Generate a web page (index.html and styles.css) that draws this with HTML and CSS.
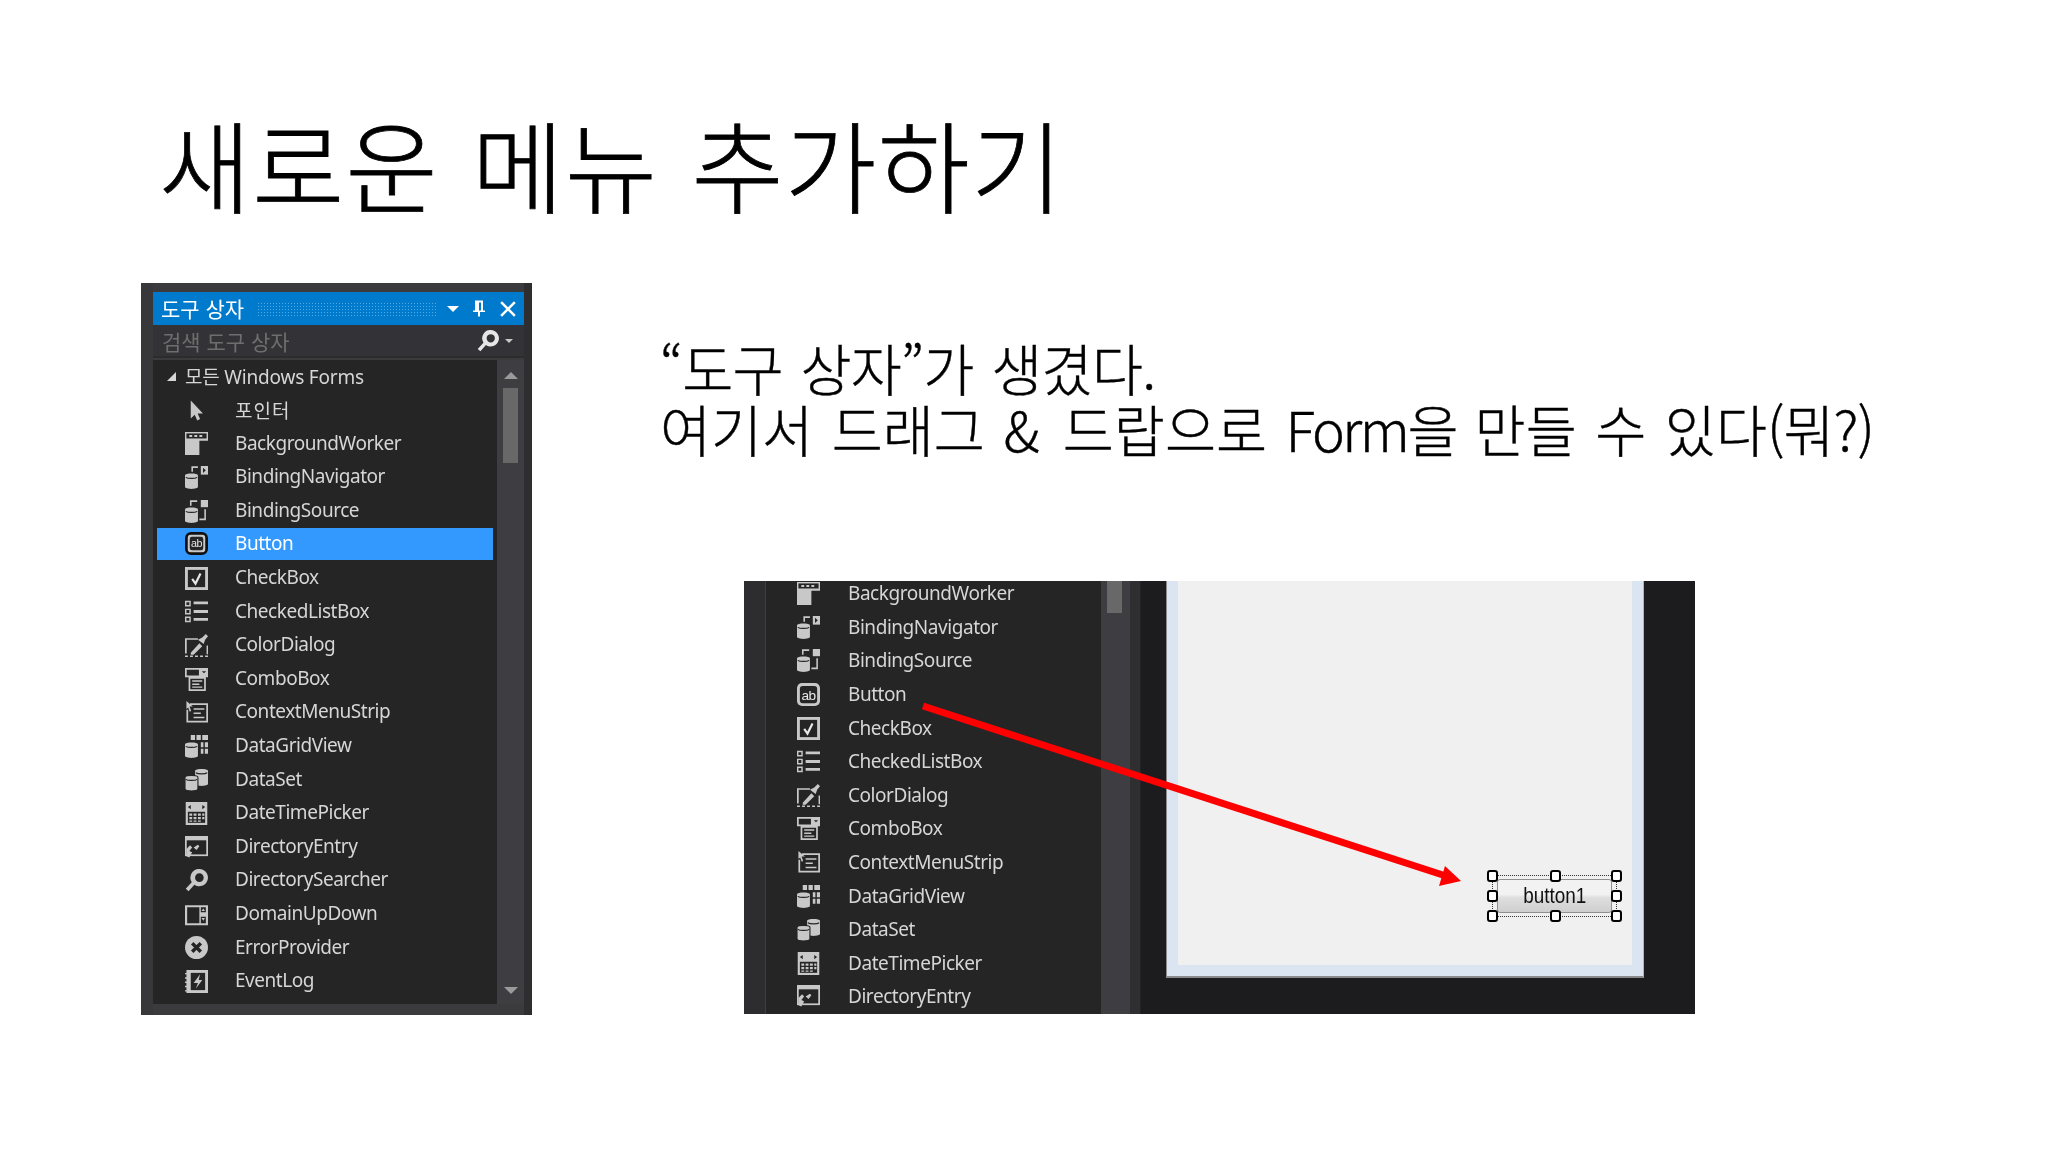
FILE: index.html
```html
<!DOCTYPE html>
<html lang="ko">
<head>
<meta charset="utf-8">
<title>새로운 메뉴 추가하기</title>
<link rel="stylesheet" href="styles.css">
</head>
<body>
<svg class="defs" width="0" height="0" aria-hidden="true">
  <defs>
    <symbol id="i-cyl" viewBox="0 0 16 16"><path d="M0 6.500c0-1.800 9-1.800 9 0v8c0 2-9 2-9 0z"/><path d="M.5 7.900c1.500 1 6.500 1 8 0" fill="none" stroke="#252526" stroke-width=".8"/></symbol>
    <symbol id="i-ptr" viewBox="0 0 16 16"><path d="M4 1v12.500l2.800-2.600 1.700 4 2-1-1.700-3.800h3.700z"/></symbol>
    <symbol id="i-bg" viewBox="0 0 16 16"><path d="M0 0h16v6h-6v10H0z"/><rect x="1" y="1" width="14" height="3.500" fill="#252526"/><path d="M3 2h2v1.500H3zM6.500 2h2v1.500h-2zM10 2h2v1.500h-2z"/></symbol>
    <symbol id="i-nav" viewBox="0 0 16 16"><use href="#i-cyl"/><path d="M5 4V.8h4" fill="none" stroke="currentColor" stroke-width="1.100"/><path d="M11 0h5v6h-5z"/><path d="M12.500 1.200l2 1.800-2 1.800z" fill="#252526"/></symbol>
    <symbol id="i-src" viewBox="0 0 16 16"><use href="#i-cyl"/><path d="M4 4V.8h4.500M10 13.500h4V6.500" fill="none" stroke="currentColor" stroke-width="1.100"/><rect x="11" y="0" width="5" height="5"/></symbol>
    <symbol id="i-btn" viewBox="0 0 16 16"><rect x="0" y="0" width="16" height="16" rx="3.500"/><rect x="2" y="2" width="12" height="12" rx="2" fill="#252526"/><text class="ab" x="8" y="11.500" text-anchor="middle" fill="#e8e8e8">ab</text></symbol>
    <symbol id="i-chk" viewBox="0 0 16 16"><path d="M0 0h16v16H0z"/><rect x="2" y="2" width="12" height="12" fill="#252526"/><path d="M5 8.200l2.300 3.300 3.500-7" fill="none" stroke="#e8e8e8" stroke-width="1.500"/></symbol>
    <symbol id="i-list" viewBox="0 0 16 16"><path d="M0 .5h4v4H0zm1 1v2h2v-2zM0 6h4v4H0zm1 1v2h2V7zM0 11.500h4v4H0zm1 1v2h2v-2zM6 1h10v2H6zM6 7h10v2H6zM6 12.500h10v2H6z" fill-rule="evenodd"/></symbol>
    <symbol id="i-color" viewBox="0 0 16 16"><path d="M0 3h9v1H1.200v9.500H0zM15 8h1v6h-1zM0 15h2v1H0zM3.500 15h2v1h-2zM7 15h2v1H7zM10.500 15h2v1h-2zM14 15h2v1h-2z"/><path d="M4 13l6-6.500 2 2L6 14.500H4zM9 4l3-1.500L14.500 0 16 1.500 14 4l-1 3z"/></symbol>
    <symbol id="i-combo" viewBox="0 0 16 16"><path d="M0 0h16v6.500h-1.500V16h-12V6.500H0zm1.200 1.200v4h8.500v-4zm10.500 1h3l-1.500 1.500zM3.700 7.500V14.800h9.600V7.500z" fill-rule="evenodd"/><path d="M5 8.500h7v1.100H5zM5 10.700h5v1.100H5zM5 12.800h7v1H5z"/></symbol>
    <symbol id="i-ctx" viewBox="0 0 16 16"><path d="M3.500 1.500H16V15H1V6h1.200v7.800h12.600V2.700H3.500z"/><path d="M1 0l4.500 3.800H3.200L4.300 7l-1 .4L2.200 4.500 1 5.500z"/><path d="M6 5h7.500v1H6zM6 8h5v1H6zM6 11h7.500v1H6z"/></symbol>
    <symbol id="i-grid" viewBox="0 0 16 16"><use href="#i-cyl"/><path d="M4 0h3v3.500H4zM8 0h3v3.500H8zM12 0h4v3.500h-4zM11 5h1.800v3.500H11zM13.800 5H16v3.500h-2.200zM11 9.500h1.800V13H11zM13.800 9.500H16V13h-2.200z"/></symbol>
    <symbol id="i-set" viewBox="0 0 16 16"><path d="M7 2c0-1.800 9-1.800 9 0v9c0 2-9 2-9 0z"/><path d="M7.500 3.300c1.500 1 6.500 1 8 0" fill="none" stroke="#252526" stroke-width=".8"/><path d="M0 6.500c0-1.800 9-1.800 9 0v8c0 2-9 2-9 0z" stroke="#252526" stroke-width=".8"/><path d="M.5 7.900c1.500 1 6.500 1 8 0" fill="none" stroke="#252526" stroke-width=".8"/></symbol>
    <symbol id="i-date" viewBox="0 0 16 16"><path d="M.5 0h15v16H.5z"/><path d="M4 2l-2 1.500L4 5zM12 2l2 1.500L12 5z" fill="#252526"/><path d="M2 6.800h12v7.700H2z" fill="#252526"/><path d="M3 8h2v1.600H3zM6 8h2v1.600H6zM9 8h2v1.600H9zM12 8h1.500v1.600H12zM3 10.500h2v1.500H3zM6 10.500h2v1.500H6zM9 10.500h2v1.500H9zM12 10.500h1.500v1.500H12zM3 12.800h2v1H3zM6 12.800h2v1H6zM9 12.800h2v1H9z"/></symbol>
    <symbol id="i-entry" viewBox="0 0 16 16"><path d="M0 0h16v14H0z"/><path d="M1.200 3h13.600v9.800H1.200z" fill="#252526"/><path d="M1 9l2.500-2.500L5 8 3 10.500l2 .8-2 3.700-2-1zM6 8l3-2 1 1.200-2 2.500z"/></symbol>
    <symbol id="i-search" viewBox="0 0 16 16"><path d="M10 0a6 6 0 1 1-3.500 10.900L2.500 15.500.5 13.800l4.200-4.600A6 6 0 0 1 10 0zm0 3a3 3 0 1 0 0 6 3 3 0 0 0 0-6z" fill-rule="evenodd"/></symbol>
    <symbol id="i-updn" viewBox="0 0 16 16"><path d="M0 1.500h16v14H0zm1.500 1.500v11h8.500V3zM11 3v3.500h3.500V3zm0 6.500v4.500h3.500V9.500z" fill-rule="evenodd"/><path d="M12.700 3.800l1.200 1.800h-2.400zM11.500 10.500h2.400l-1.200 1.800z"/></symbol>
    <symbol id="i-err" viewBox="0 0 16 16"><circle cx="8" cy="8" r="8"/><path d="M5 5l6 6M11 5l-6 6" stroke="#252526" stroke-width="2.400"/></symbol>
    <symbol id="i-log" viewBox="0 0 16 16"><path d="M1 0h15v16H1zM0 2h2v1H0zM0 5h2v1H0zM0 8h2v1H0zM0 11h2v1H0zM0 14h2v1H0z"/><path d="M4 2h10v12H4z" fill="#252526"/><path d="M10.500 3L6 9h3l-1.500 4L12 7H9.500z"/></symbol>
    <symbol id="i-next" viewBox="0 0 16 16"><path d="M0 0h16v16H0z"/><path d="M1.200 2h13.600v12H1.200z" fill="#252526"/></symbol>
  </defs>
</svg>

<main class="slide">
  <h1 class="title">새로운 메뉴 추가하기</h1>
  <div class="content">
    <section class="toolbox">
      <header class="tb-title">
        <span class="tb-name">도구 상자</span>
        <span class="tb-grip"></span>
        <span class="tb-drop"></span>
        <svg class="tb-pin" viewBox="0 0 12 16"><path d="M2 0h8v10H8V2H6v8H2zM0 10h12v1.500H0zM5 11h2v5H5z"/></svg>
        <svg class="tb-close" viewBox="0 0 14 14"><path d="M1 1l12 12M13 1L1 13"/></svg>
      </header>
      <div class="tb-search">
        <span class="tb-placeholder">검색 도구 상자</span>
        <svg class="tb-glass"><use href="#i-search"/></svg>
        <span class="tb-caret"></span>
      </div>
      <div class="tb-body">
        <ul class="list">
          <li class="group"><span class="group-arrow"></span><span class="group-name">모든 Windows Forms</span></li>
          <li class="row"><svg class="ico"><use href="#i-ptr"/></svg><span class="ko">포인터</span></li>
          <li class="row"><svg class="ico"><use href="#i-bg"/></svg><span>BackgroundWorker</span></li>
          <li class="row"><svg class="ico"><use href="#i-nav"/></svg><span>BindingNavigator</span></li>
          <li class="row"><svg class="ico"><use href="#i-src"/></svg><span>BindingSource</span></li>
          <li class="row selected"><svg class="ico"><rect x="1" y="1" width="21" height="21" rx="5" fill="#111" stroke="#111" stroke-width="2"/><use href="#i-btn" x="2.500" y="2.500" width="18" height="18"/></svg><span>Button</span></li>
          <li class="row"><svg class="ico"><use href="#i-chk"/></svg><span>CheckBox</span></li>
          <li class="row"><svg class="ico"><use href="#i-list"/></svg><span>CheckedListBox</span></li>
          <li class="row"><svg class="ico"><use href="#i-color"/></svg><span>ColorDialog</span></li>
          <li class="row"><svg class="ico"><use href="#i-combo"/></svg><span>ComboBox</span></li>
          <li class="row"><svg class="ico"><use href="#i-ctx"/></svg><span>ContextMenuStrip</span></li>
          <li class="row"><svg class="ico"><use href="#i-grid"/></svg><span>DataGridView</span></li>
          <li class="row"><svg class="ico"><use href="#i-set"/></svg><span>DataSet</span></li>
          <li class="row"><svg class="ico"><use href="#i-date"/></svg><span>DateTimePicker</span></li>
          <li class="row"><svg class="ico"><use href="#i-entry"/></svg><span>DirectoryEntry</span></li>
          <li class="row"><svg class="ico"><use href="#i-search"/></svg><span>DirectorySearcher</span></li>
          <li class="row"><svg class="ico"><use href="#i-updn"/></svg><span>DomainUpDown</span></li>
          <li class="row"><svg class="ico"><use href="#i-err"/></svg><span>ErrorProvider</span></li>
          <li class="row"><svg class="ico"><use href="#i-log"/></svg><span>EventLog</span></li>
          <li class="row"><svg class="ico"><use href="#i-next"/></svg></li>
        </ul>
        <div class="scroll">
          <span class="sc-up"></span>
          <span class="sc-thumb"></span>
          <span class="sc-down"></span>
        </div>
      </div>
    </section>

    <div class="right">
      <p class="caption"><span class="line-1">“도구 상자”가 생겼다.</span><br>여기서 드래그 <span class="amp">&amp;</span> 드랍으로 <span class="form-word">Form을</span> 만들 수 있다<span class="tail">(뭐?)</span></p>
      <figure class="designer">
        <div class="d-gutter"></div>
        <ul class="list d-list">
          <li class="row"><svg class="ico"><use href="#i-bg"/></svg><span>BackgroundWorker</span></li>
          <li class="row"><svg class="ico"><use href="#i-nav"/></svg><span>BindingNavigator</span></li>
          <li class="row"><svg class="ico"><use href="#i-src"/></svg><span>BindingSource</span></li>
          <li class="row"><svg class="ico"><use href="#i-btn"/></svg><span>Button</span></li>
          <li class="row"><svg class="ico"><use href="#i-chk"/></svg><span>CheckBox</span></li>
          <li class="row"><svg class="ico"><use href="#i-list"/></svg><span>CheckedListBox</span></li>
          <li class="row"><svg class="ico"><use href="#i-color"/></svg><span>ColorDialog</span></li>
          <li class="row"><svg class="ico"><use href="#i-combo"/></svg><span>ComboBox</span></li>
          <li class="row"><svg class="ico"><use href="#i-ctx"/></svg><span>ContextMenuStrip</span></li>
          <li class="row"><svg class="ico"><use href="#i-grid"/></svg><span>DataGridView</span></li>
          <li class="row"><svg class="ico"><use href="#i-set"/></svg><span>DataSet</span></li>
          <li class="row"><svg class="ico"><use href="#i-date"/></svg><span>DateTimePicker</span></li>
          <li class="row"><svg class="ico"><use href="#i-entry"/></svg><span>DirectoryEntry</span></li>
        </ul>
        <div class="d-scroll"><span class="d-thumb"></span></div>
        <div class="d-strip"></div>
        <div class="d-canvas">
          <div class="form">
            <div class="form-inner">
              <div class="selection">
                <div class="win-btn"><span class="win-label">button1</span></div>
                <span class="h h-tl"></span><span class="h h-tc"></span><span class="h h-tr"></span>
                <span class="h h-ml"></span><span class="h h-mr"></span>
                <span class="h h-bl"></span><span class="h h-bc"></span><span class="h h-br"></span>
              </div>
            </div>
          </div>
        </div>
        <svg class="arrow" viewBox="0 0 951 431"><path d="M179 125L705 296" class="arrow-line"/><path d="M717 300L701 285L695 305Z" class="arrow-head"/></svg>
      </figure>
    </div>
  </div>
</main>
</body>
</html>
```
FILE: styles.css
```css
* { box-sizing: border-box; }
html, body { margin: 0; padding: 0; background: #fff; }
body { width: 2048px; height: 1152px; overflow: hidden; font-family: "Noto Sans", "Noto Sans CJK KR", sans-serif; }
.defs { position: absolute; }
.slide { width: 2048px; height: 1152px; padding-left: 141px; }
.title {
  margin: 0; padding: 102px 0 0 18px; height: 283px;
  font: 300 100px/122px "Noto Sans CJK KR", sans-serif;
  letter-spacing: 1.200px; word-spacing: 4px; color: #000;
  -webkit-text-stroke: .8px #000;
}
.content { display: flex; align-items: flex-start; }

/* tool box */
.toolbox {
  width: 391px; height: 732px; flex: none;
  padding: 9px 8px 11px 12px;
  background: linear-gradient(90deg, #38383b 0 12px, #3b3b3e 12px 383px, #2e2e30 383px);
  filter: blur(.35px);
  display: flex; flex-direction: column;
}
.tb-title {
  height: 33px; background: #007acc; color: #fff;
  display: flex; align-items: center; padding-left: 8px; flex: none;
}
.tb-name { font: 400 21px/1 "Noto Sans CJK KR", sans-serif; width: 96px; flex: none; white-space: nowrap; }
.tb-grip {
  width: 180px; height: 14px; flex: none;
  background-image: radial-gradient(circle, #4fabe2 .8px, transparent 1px);
  background-size: 3px 3px;
}
.tb-drop { width: 0; height: 0; margin-left: 10px; border: 6px solid transparent; border-top: 6px solid #fff; border-bottom: 0; flex: none; }
.tb-pin { width: 12px; height: 17px; margin-left: 14px; fill: #fff; flex: none; }
.tb-close { width: 16px; height: 16px; margin-left: 15px; fill: none; stroke: #fff; stroke-width: 2.2; flex: none; }
.tb-search {
  height: 33px; flex: none; display: flex; align-items: center;
  padding-left: 9px; background: #333337; border-bottom: 2px solid #2c2c2e;
  color: #6e6e6e;
}
.tb-placeholder { font: 400 21px/1 "Noto Sans CJK KR", sans-serif; width: 315px; flex: none; padding-top: 2px; white-space: nowrap; }
.tb-glass { width: 22px; height: 22px; fill: #e6e6e6; color: #e6e6e6; flex: none; }
.tb-caret { margin-left: 6px; width: 0; height: 0; border: 4.500px solid transparent; border-top: 4.500px solid #c8c8c8; border-bottom: 0; flex: none; }
.tb-body { flex: 1; display: flex; min-height: 0; margin-top: 2px; }

.list {
  list-style: none; margin: 0; padding: 0; overflow: hidden;
  background: #252526; color: #d6d6d6;
  font: 400 19px/1 "Noto Sans", "Noto Sans CJK KR", sans-serif;
  letter-spacing: -.45px;
}
.tb-body .list { width: 344px; height: 644px; }
.group, .row { height: 33.6px; display: flex; align-items: center; white-space: nowrap; }
.group { padding-left: 32px; }
.group-name { margin-top: 2px; letter-spacing: -.2px; }
.group-arrow {
  margin-left: -18px; margin-right: 9px;
  width: 0; height: 0; border-left: 9px solid transparent; border-bottom: 9px solid #d6d6d6;
}
.row { padding-left: 28px; margin: 0 4px; }
.tb-body .row span { margin-top: -1.500px; }
.tb-body .selected span { margin-top: 0; }
.ico { width: 23px; height: 23px; margin-right: 27px; flex: none; fill: #c8c8c8; color: #c8c8c8; }
.ab { font: 400 9.500px "Liberation Sans", sans-serif; }
.ko { font-family: "Noto Sans CJK KR", sans-serif; letter-spacing: 1px; }
.selected { background: #3399ff; color: #fff; height: 32px; margin-bottom: 1.600px; }

.scroll { width: 27px; background: #3e3e42; padding: 12px 6px 8px; display: flex; flex-direction: column; align-items: center; }
.sc-up { width: 0; height: 0; border: 7.500px solid transparent; border-bottom: 7px solid #9a9a9a; border-top: 0; }
.sc-thumb { width: 15px; height: 75px; margin-top: 9px; background: #686868; flex: none; }
.sc-down { width: 0; height: 0; margin-top: auto; margin-bottom: 2px; border: 7.500px solid transparent; border-top: 7px solid #9a9a9a; border-bottom: 0; }

/* right */
.right { margin-left: 128px; width: 1036px; }
.caption {
  margin: 54px 0 0; height: 244px;
  font: 300 55.500px/61px "Noto Sans CJK KR", "Noto Sans", sans-serif; color: #000;
  white-space: nowrap; word-spacing: 3px;
  -webkit-text-stroke: .4px #000;
}
.line-1, .amp, .form-word, .tail { display: inline-block; }
.line-1 { letter-spacing: -.8px; }
.amp { letter-spacing: 5px; }
.form-word { letter-spacing: -2.500px; }
.tail { letter-spacing: -1px; }
.designer {
  position: relative; margin: 0 0 0 84px; width: 951px; height: 433px;
  display: flex; overflow: hidden; filter: blur(.3px);
}
.d-gutter { width: 22px; background: #2d2d30; border-right: 1px solid #3e3e42; flex: none; }
.d-list { width: 335px; flex: none; }
.d-list .row { margin: 0; padding-left: 31px; position: relative; top: -4px; }
.d-list .ico { margin-right: 28px; }
.d-scroll { width: 29px; background: #3e3e42; padding: 0 6px; flex: none; }
.d-thumb { display: block; width: 15px; height: 32px; background: #686868; }
.d-strip { width: 11px; background: #2f2f31; border-right: 1px solid #232325; flex: none; }
.d-canvas { flex: 1; background: #1c1c1e; padding: 0 51px 36px 25px; display: flex; }
.form { flex: 1; background: #dae5f1; padding: 0 11px 11px; border-left: 1px solid #8a8a8a; border-bottom: 2px solid #8a8a8a; border-right: 1px solid #aeb6bf; }
.form-inner { height: 100%; background: #f0f0f1; position: relative; }
.selection { position: absolute; right: 15px; bottom: 48px; width: 125px; height: 42px; border: 1px dotted #333; }
.win-btn {
  position: absolute; left: 4px; right: 4px; top: 3px; bottom: 3px;
  border: 1.500px solid #8f8f8f; border-radius: 3px;
  background: linear-gradient(#f2f2f2 0 45%, #dedede 55%, #cfcfcf);
  display: flex; align-items: center; justify-content: center;
  color: #111;
}
.win-label { display: block; font: 400 22px/1 "Liberation Sans", sans-serif; transform: scaleX(.86); }
.h { position: absolute; width: 11px; height: 12px; background: #fff; border: 2px solid #000; border-radius: 3px; }
.h-tl, .h-tc, .h-tr { top: -6px; }
.h-ml, .h-mr { top: 14px; }
.h-bl, .h-bc, .h-br { bottom: -6px; }
.h-tl, .h-ml, .h-bl { left: -6px; }
.h-tc, .h-bc { left: 57px; }
.h-tr, .h-mr, .h-br { right: -6px; }
.arrow { position: absolute; inset: 0; width: 951px; height: 431px; }
.arrow-line { stroke: #fe0000; stroke-width: 7; fill: none; }
.arrow-head { fill: #fe0000; }
```
